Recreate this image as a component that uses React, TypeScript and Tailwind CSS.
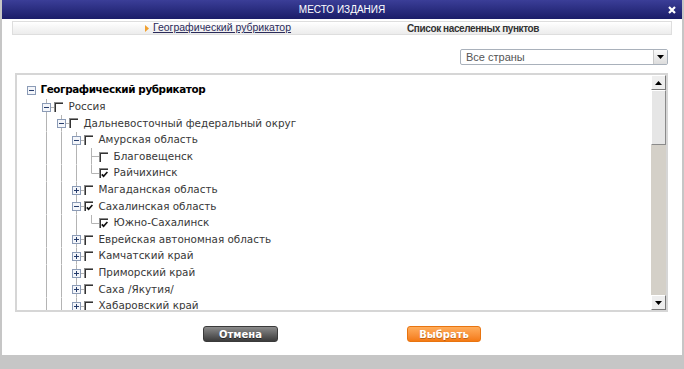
// Диалог выбора места издания
type RowKind = 'root' | 'minus' | 'plus' | 'leaf';

type TreeRow = {
    label: string;
    level: number;
    kind: RowKind;
    checked?: boolean;
    next?: boolean;
};

const treeRows: TreeRow[] = [
    { label: 'Географический рубрикатор', level: 0, kind: 'root' },
    { label: 'Россия', level: 1, kind: 'minus', next: true },
    { label: 'Дальневосточный федеральный округ', level: 2, kind: 'minus', next: true },
    { label: 'Амурская область', level: 3, kind: 'minus', next: true },
    { label: 'Благовещенск', level: 4, kind: 'leaf', next: true },
    { label: 'Райчихинск', level: 4, kind: 'leaf', checked: true },
    { label: 'Магаданская область', level: 3, kind: 'plus', next: true },
    { label: 'Сахалинская область', level: 3, kind: 'minus', checked: true, next: true },
    { label: 'Южно-Сахалинск', level: 4, kind: 'leaf', checked: true },
    { label: 'Еврейская автономная область', level: 3, kind: 'plus', next: true },
    { label: 'Камчатский край', level: 3, kind: 'plus', next: true },
    { label: 'Приморский край', level: 3, kind: 'plus', next: true },
    { label: 'Саха /Якутия/', level: 3, kind: 'plus', next: true },
    { label: 'Хабаровский край', level: 3, kind: 'plus', next: true },
];

const LINE = '#b4b4b4';

// одна клетка дерева: линии и кнопка +/-
const TreeCell = ({ kind, guide, next, top }: { kind?: RowKind; guide?: boolean; next?: boolean; top?: boolean }) => (
    <svg width="15" height="16.6" viewBox="0 0 15 16.6" className="shrink-0">
        {guide && <line x1="7.5" y1="0" x2="7.5" y2="16.6" stroke={LINE} strokeWidth="1" />}
        {kind === 'leaf' && (
            <>
                <line x1="7.5" y1="0" x2="7.5" y2={next ? 16.6 : 8.3} stroke={LINE} strokeWidth="1" />
                <line x1="7.5" y1="8.5" x2="15" y2="8.5" stroke={LINE} strokeWidth="1" />
            </>
        )}
        {(kind === 'minus' || kind === 'plus' || kind === 'root') && (
            <>
                {top && <line x1="7.5" y1="0" x2="7.5" y2="4.3" stroke={LINE} strokeWidth="1" />}
                {next && <line x1="7.5" y1="12.3" x2="7.5" y2="16.6" stroke={LINE} strokeWidth="1" />}
                {kind !== 'root' && <line x1="11.5" y1="8.5" x2="15" y2="8.5" stroke={LINE} strokeWidth="1" />}
                <rect x="3.5" y="4.5" width="8" height="8" fill="#f4f6fa" stroke="#8b9bb6" strokeWidth="1" />
                <line x1="5" y1="8.5" x2="10" y2="8.5" stroke="#243a6a" strokeWidth="1" />
                {kind === 'plus' && <line x1="7.5" y1="6" x2="7.5" y2="11" stroke="#243a6a" strokeWidth="1" />}
            </>
        )}
    </svg>
);

const CheckBox = ({ checked }: { checked?: boolean }) => (
    <span className="flex h-[10px] w-[9px] shrink-0 border-t border-l border-[#8a8a8a]">
        <span className="flex h-full w-full items-center justify-center border-t border-l border-[#333]">
            {checked && (
                <svg width="7" height="7" viewBox="0 0 7 7">
                    <path d="M0.8 3.3 L2.6 5.2 L6.4 1" fill="none" stroke="#111" strokeWidth="1.7" />
                </svg>
            )}
        </span>
    </span>
);

const TreeLine = ({ row }: { row: TreeRow }) => {
    const guides = Array.from({ length: row.level }, (_, i) => i >= 1);
    return (
        <div className="flex h-[16.6px] items-center">
            {guides.map((g, i) => (
                <TreeCell key={i} guide={g} />
            ))}
            <TreeCell kind={row.kind} next={row.next} top={row.level > 0} />
            {row.kind === 'root' ? (
                <span className="ml-[2px] text-[10.4px] font-bold tracking-[-0.4px] whitespace-nowrap text-black">{row.label}</span>
            ) : (
                <>
                    <CheckBox checked={row.checked} />
                    <span className="ml-[6px] text-[10.4px] whitespace-nowrap text-[#383838]">{row.label}</span>
                </>
            )}
        </div>
    );
};

const ScrollArrow = ({ up }: { up?: boolean }) => (
    <div className="flex h-[15px] w-[15px] items-center justify-center border-t border-l border-t-white border-l-white border-r border-b border-r-[#7a7a7a] border-b-[#7a7a7a] bg-[#eeeeee]">
        <svg width="7" height="4" viewBox="0 0 7 4">
            <path d={up ? 'M0 4 L3.5 0 L7 4 Z' : 'M0 0 L3.5 4 L7 0 Z'} fill="#000" />
        </svg>
    </div>
);

export default function App() {
    return (
        <div className="flex h-[369px] w-[684px] flex-col overflow-hidden border-x-2 border-[#c6c6c6] bg-white font-['Liberation_Sans',Arial,sans-serif]">
            {/* заголовок */}
            <div className="relative -mx-[2px] flex h-[19px] shrink-0 items-center justify-center rounded-t-[3px] bg-linear-to-b from-[#3b3e98] to-[#1b1d68]">
                <span className="text-[10px] text-white">МЕСТО ИЗДАНИЯ</span>
                <svg width="8" height="8" viewBox="0 0 8 8" className="absolute top-[6px] right-[8px]">
                    <path d="M1 1 L7 7 M7 1 L1 7" stroke="#fff" strokeWidth="2.2" />
                </svg>
            </div>

            {/* вкладки */}
            <div className="mx-[10px] mt-[2px] flex h-[14px] shrink-0 items-center justify-center gap-[116px] border border-[#dedede] bg-linear-to-b from-white to-[#ececec]">
                <span className="flex items-center gap-[4px]">
                    <svg width="4" height="7" viewBox="0 0 4 7">
                        <path d="M0 0 L4 3.5 L0 7 Z" fill="#f0a030" />
                    </svg>
                    <span className="text-[10.5px] text-[#2b2b5a] underline">Географический рубрикатор</span>
                </span>
                <span className="text-[10px] font-bold tracking-[-0.4px] text-[#333]">Список населенных пунктов</span>
            </div>

            {/* выбор страны */}
            <div className="mt-[14px] flex shrink-0 justify-end pr-[14px]">
                <div className="flex h-[16px] w-[208px] items-center justify-between rounded-[2px] border border-[#a9b1bb] bg-white pl-[5px]">
                    <span className="text-[11px] text-[#555]">Все страны</span>
                    <div className="flex h-[14px] w-[14px] items-center justify-center border-l border-[#c8c8c8] bg-linear-to-b from-[#fafafa] to-[#dcdcdc]">
                        <svg width="7" height="4" viewBox="0 0 7 4">
                            <path d="M0 0 L3.5 4 L7 0 Z" fill="#000" />
                        </svg>
                    </div>
                </div>
            </div>

            {/* дерево */}
            <div className="mt-[8px] ml-[13px] mr-[14px] flex h-[239px] shrink-0 border-2 border-[#d6d6d6] bg-white">
                <div className="flex-1 overflow-hidden pt-[7px] pl-[6.5px] font-['DejaVu_Sans',Verdana,sans-serif]">
                    {treeRows.map((row) => (
                        <TreeLine key={row.label} row={row} />
                    ))}
                </div>
                <div className="flex w-[15px] flex-col bg-[#d4d0c8]">
                    <ScrollArrow up />
                    <div className="h-[55px] border-t border-l border-t-white border-l-white border-r border-b border-r-[#8a8a8a] border-b-[#8a8a8a] bg-[#e6e6e6]" />
                    <div className="flex-1" />
                    <ScrollArrow />
                </div>
            </div>

            {/* кнопки */}
            <div className="mt-[14px] flex shrink-0 justify-center gap-[129px] font-['DejaVu_Sans',Verdana,sans-serif]">
                <button className="flex h-[16px] w-[75px] items-center justify-center rounded-[3px] border border-[#3a3a3a] bg-linear-to-b from-[#8c8c8c] to-[#3c3c3c] text-[10px] font-bold text-white [text-shadow:0_1px_0_rgba(0,0,0,0.5)]">
                    Отмена
                </button>
                <button className="flex h-[16px] w-[74px] items-center justify-center rounded-[3px] border border-[#e87410] bg-linear-to-b from-[#ffad5a] to-[#f47a12] text-[10px] font-bold text-white [text-shadow:0_1px_0_rgba(0,0,0,0.25)]">
                    Выбрать
                </button>
            </div>

            {/* нижняя полоса */}
            <div className="-mx-[2px] mt-auto h-[14px] shrink-0 bg-[#c6c6c6]" />
        </div>
    );
}
